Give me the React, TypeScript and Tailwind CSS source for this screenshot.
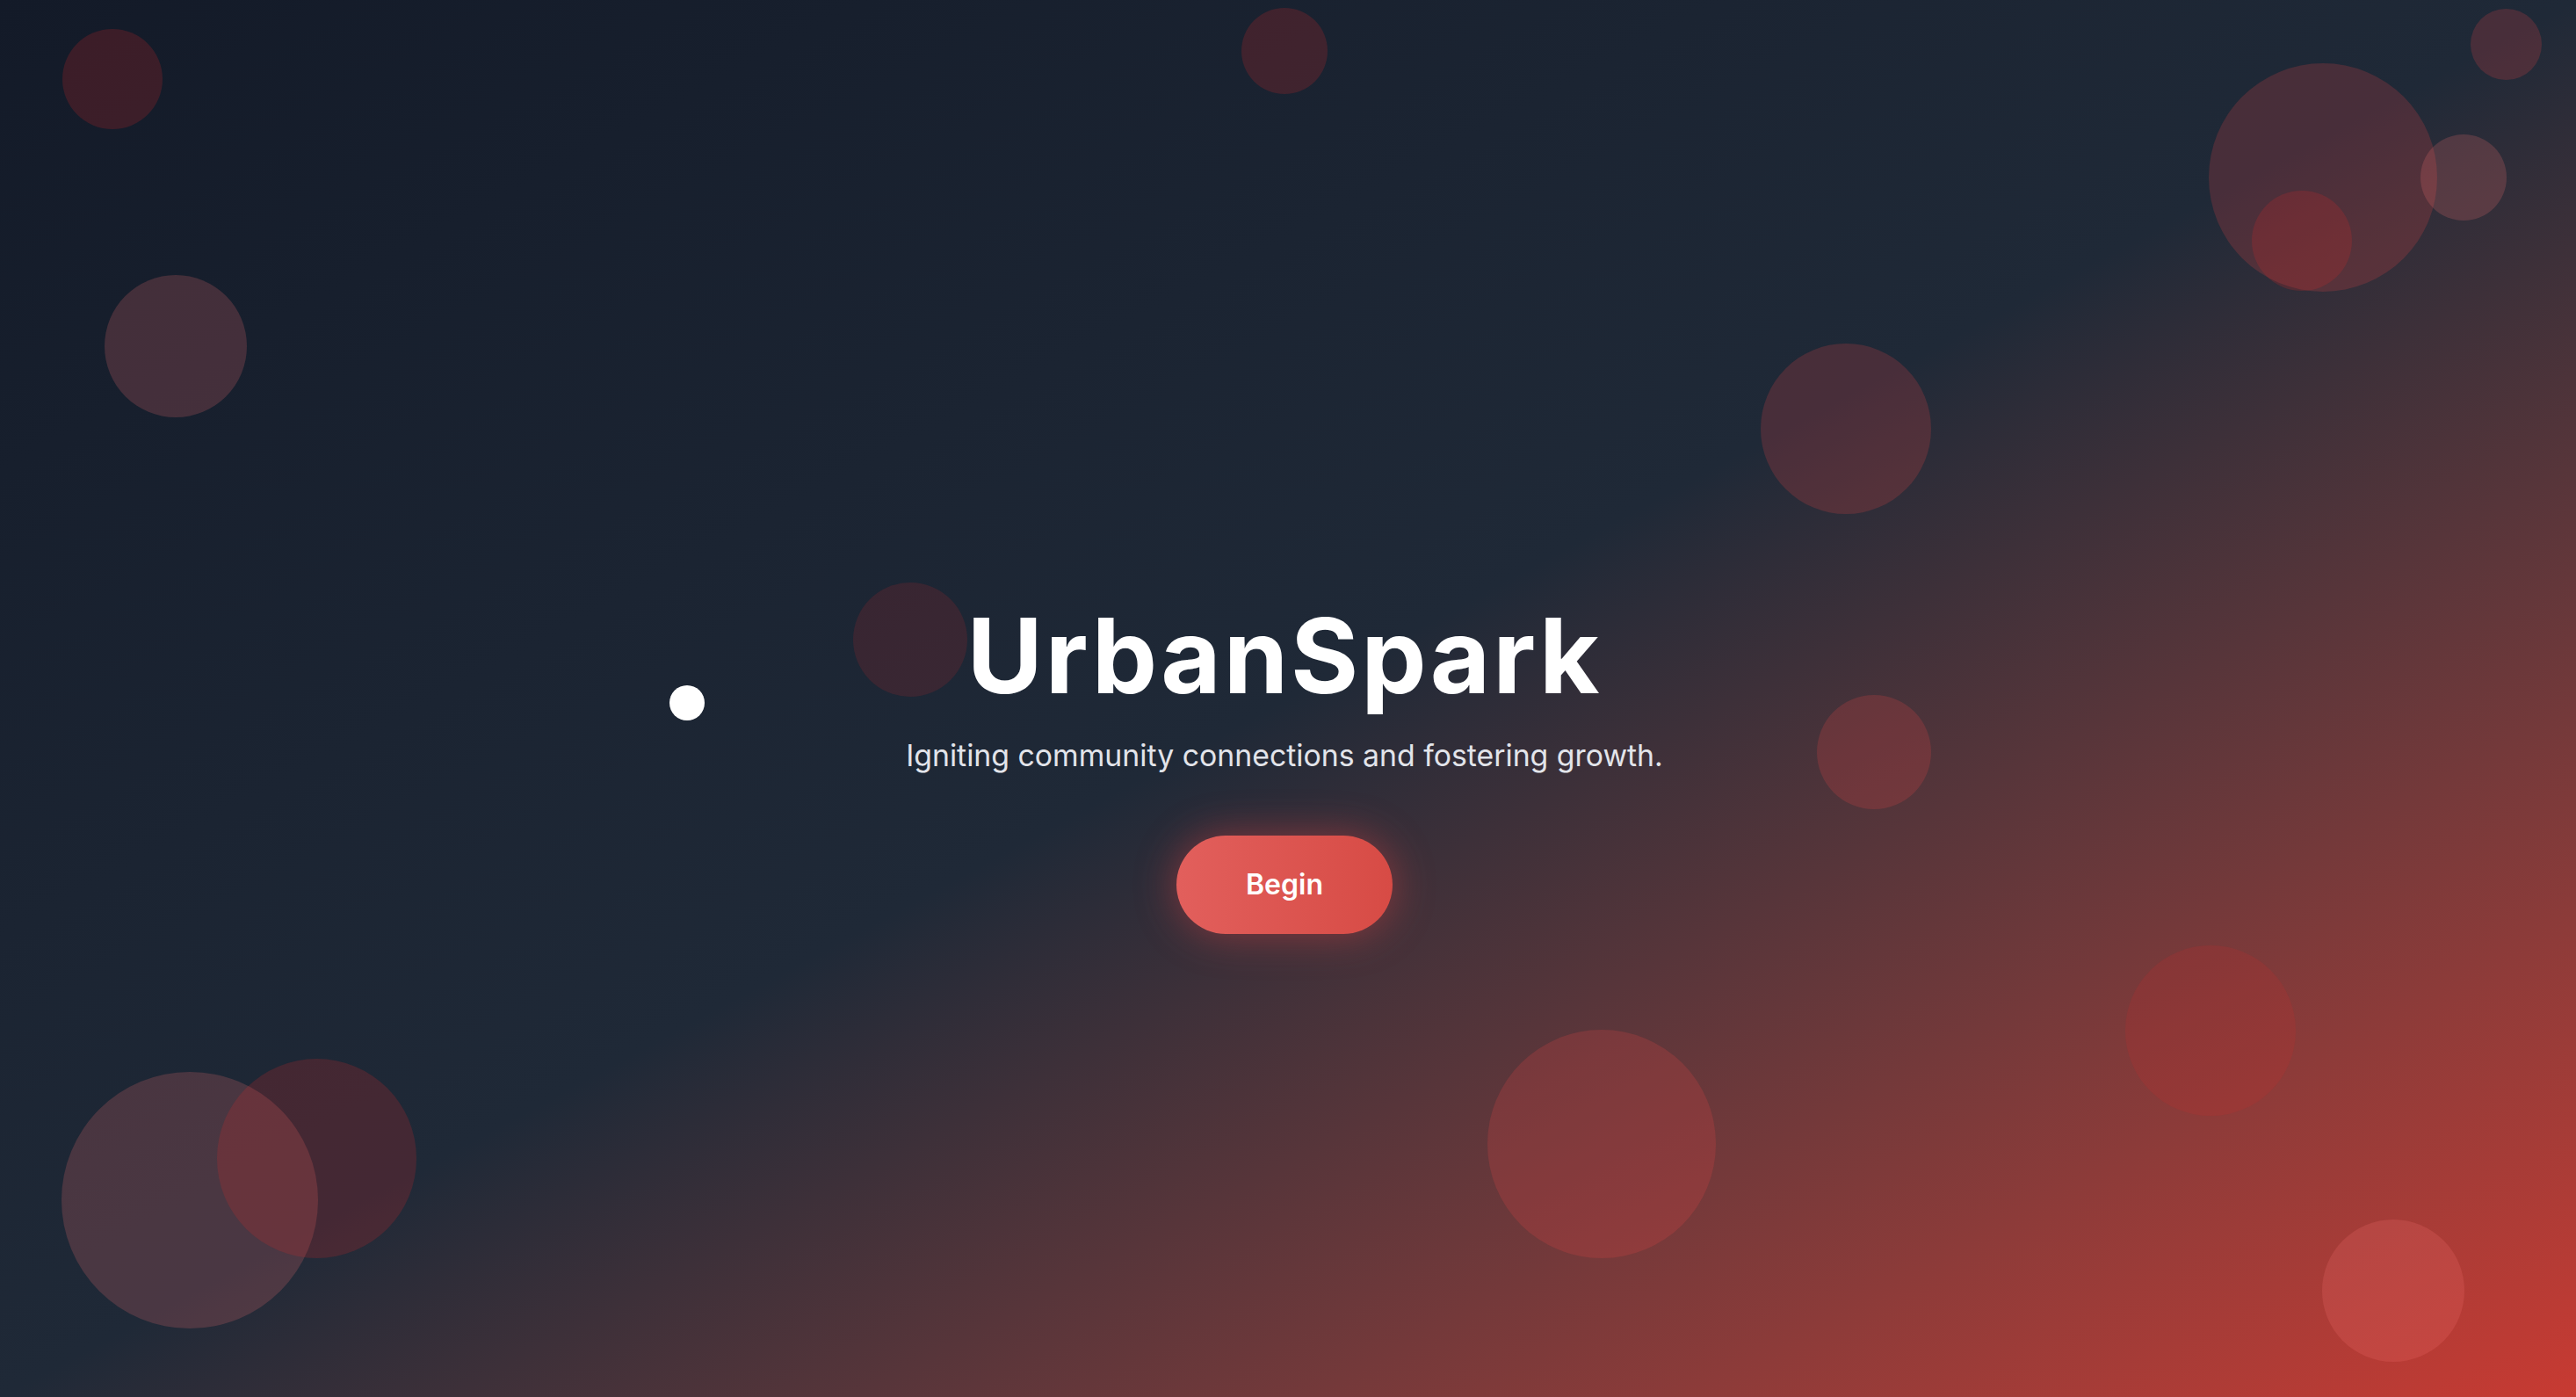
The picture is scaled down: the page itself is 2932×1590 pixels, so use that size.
const bubbles = [
  { x: 128, y: 90, d: 114, c: "bg-[#dc2626]/20" },
  { x: 200, y: 394, d: 162, c: "bg-[#f87171]/20" },
  { x: 1462, y: 58, d: 98, c: "bg-[#dc2626]/20" },
  { x: 2644, y: 202, d: 260, c: "bg-[#ef4444]/20" },
  { x: 2620, y: 274, d: 114, c: "bg-[#dc2626]/20" },
  { x: 2804, y: 202, d: 98, c: "bg-[#f87171]/20" },
  { x: 2852, y: 50, d: 81, c: "bg-[#ef4444]/20" },
  { x: 2101, y: 488, d: 194, c: "bg-[#ef4444]/20" },
  { x: 1036, y: 728, d: 130, c: "bg-[#dc2626]/15" },
  { x: 2133, y: 856, d: 130, c: "bg-[#ef4444]/20" },
  { x: 2516, y: 1173, d: 194, c: "bg-[#dc2626]/15" },
  { x: 1823, y: 1302, d: 260, c: "bg-[#ef4444]/20" },
  { x: 2724, y: 1469, d: 162, c: "bg-[#f87171]/20" },
  { x: 216, y: 1366, d: 292, c: "bg-[#f87171]/20" },
  { x: 360, y: 1318, d: 227, c: "bg-[#dc2626]/20" },
];

export default function App() {
  return (
    <main
      className="relative flex h-[1590px] w-full flex-col items-center justify-center overflow-hidden bg-gradient-to-br from-[#131a28] via-[#1f2937] to-[#c83a32] pt-[160px] pr-[8px]"
      style={{ fontFamily: "Inter, 'Noto Sans', sans-serif" }}
    >
      {bubbles.map((b, i) => (
        <div
          key={i}
          className={`pointer-events-none absolute rounded-full ${b.c}`}
          style={{ left: b.x - b.d / 2, top: b.y - b.d / 2, width: b.d, height: b.d }}
        />
      ))}
      <div
        className="pointer-events-none absolute h-10 w-10 rounded-full bg-white"
        style={{ left: 762, top: 780 }}
      />

      <h1 className="relative text-[118px] font-bold leading-none tracking-wide text-white">
        UrbanSpark
      </h1>
      <p className="relative mt-[30px] text-[33.8px] leading-[1.5] text-[#e2e4ea]">
        Igniting community connections and fostering growth.
      </p>
      <button className="relative mt-[66px] flex h-[112px] w-[246px] items-center justify-center rounded-full bg-gradient-to-r from-[#e25f5c] to-[#d74b45] text-[32px] font-semibold text-white shadow-[0_0_48px_rgba(239,68,68,0.45)]">
        Begin
      </button>
    </main>
  );
}
